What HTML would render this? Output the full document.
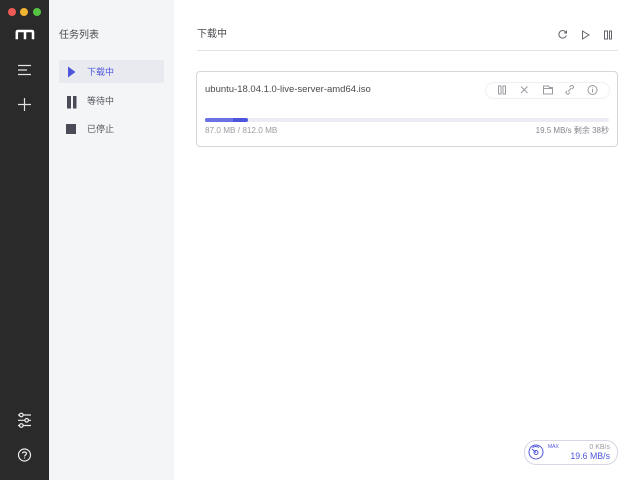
<!DOCTYPE html>
<html>
<head>
<meta charset="utf-8">
<style>
html,body{margin:0;padding:0;width:640px;height:480px;overflow:hidden;background:#fff;font-family:"Liberation Sans","Noto Sans CJK SC",sans-serif}
div,svg{position:absolute}
.t{white-space:nowrap}
</style>
</head>
<body>
<div style="left:0;top:0;width:49px;height:480px;background:#2a2a2a"></div>
<div style="left:49px;top:0;width:125px;height:480px;background:#f4f5f7"></div>
<div style="left:8px;top:8px;width:8px;height:8px;border-radius:50%;background:#ee5a55"></div>
<div style="left:20px;top:8px;width:8px;height:8px;border-radius:50%;background:#f0b435"></div>
<div style="left:33px;top:8px;width:8px;height:8px;border-radius:50%;background:#55c443"></div>

<svg style="left:0;top:0" width="49" height="480" fill="none" stroke="#fff">
<path d="M16.800 39.300V32.300Q16.800 31 18 31H31.800Q33 31 33 32.300V39.300M25 39.300V32" stroke-width="2.500"/>
<path d="M18 65.500H31M18 70H27M18 74.500H31" stroke="#e4e4e4" stroke-width="1.200"/>
<path d="M24.500 98V111M18 104.500H31" stroke="#e4e4e4" stroke-width="1.200"/>
<g stroke-width="1.200" stroke="#ececec">
<path d="M18 415H19.500M23 415H31M18 420.300H25M28.500 420.300H31M18 425.500H19.500M23 425.500H31"/>
<circle cx="21.300" cy="415" r="1.800"/><circle cx="26.700" cy="420.300" r="1.800"/><circle cx="21.300" cy="425.500" r="1.800"/>
<circle cx="24.500" cy="455" r="6"/>
<path d="M22.500 453.300C22.700 451.500 26.500 451.500 26.500 453.500C26.500 455 24.500 455 24.500 456.500M24.500 457.500V458.500"/>
</g>
</svg>

<div class="t" style="left:59px;top:28px;font-size:10px;line-height:15px;color:#4a4a4f">任务列表</div>
<div style="left:59px;top:60px;width:105px;height:23px;border-radius:2px;background:#e9eaef"></div>
<svg style="left:59px;top:60px" width="30" height="85">
<path d="M9 6.500L16.500 12L9 17.500Z" fill="#4d55dc"/>
<path d="M8 36H12V48.500H8ZM14 36H17.500V48.500H14Z" fill="#4a4b57"/>
<path d="M7 64H17V74H7Z" fill="#4a4b57"/>
</svg>
<div class="t" style="left:87px;top:65px;font-size:9px;line-height:14px;color:#4d55dc">下载中</div>
<div class="t" style="left:87px;top:94px;font-size:9px;line-height:14px;color:#55565c">等待中</div>
<div class="t" style="left:87px;top:122px;font-size:9px;line-height:14px;color:#55565c">已停止</div>

<div class="t" style="left:197px;top:27px;font-size:10px;line-height:15px;color:#4a4a4f">下载中</div>
<div style="left:197px;top:50px;width:421px;height:1px;background:#e3e3e6"></div>
<svg style="left:550px;top:25px" width="70" height="20" fill="none" stroke="#66676d" stroke-width="1">
<path d="M16 7.500A3.800 3.800 0 1 0 16.300 10.500M16.500 5.500V8H14"/>
<path d="M32.500 6L39 10L32.500 14Z"/>
<path d="M54.500 6H57.500V14H54.500ZM59.500 6H61.500V14H59.500Z"/>
</svg>

<div style="left:196px;top:71px;width:420px;height:74px;border:1px solid #d6d6d9;border-radius:4px;background:#fff"></div>
<div class="t" style="left:205px;top:83px;font-size:9.500px;line-height:14px;color:#4a4a4f">ubuntu-18.04.1.0-live-server-amd64.iso</div>
<div style="left:485px;top:82px;width:123px;height:15px;border:1px solid #f0f0f2;border-radius:9px"></div>
<svg style="left:490px;top:80px" width="115" height="20" fill="none" stroke="#9a9ba0" stroke-width="1">
<path d="M8.500 6H11V14H8.500ZM13 6H15.500V14H13Z"/>
<path d="M31 6.500L37.500 13M37.500 6.500L31 13"/>
<path d="M53.500 6H58.500L59.500 7.500H62.500V14H53.500ZM53.500 8.500H62.500"/>
<path d="M77 11L76 12A1.800 1.800 0 0 0 78.500 14L80 12.500M82 9L83.500 7.500A1.800 1.800 0 0 0 81 5.500L79.500 7M78 11.500L81.500 8"/>
<circle cx="102.500" cy="10" r="4.500"/>
<path d="M102.500 9V12.500M102.500 7.500V8.200"/>
</svg>
<div style="left:205px;top:118px;width:404px;height:4px;border-radius:2px;background:#ebecf5"></div>
<div style="left:205px;top:118px;width:43px;height:4px;border-radius:2px;background:#4d55dc"></div>
<div style="left:205px;top:118px;width:28px;height:4px;border-radius:2px 0 0 2px;background:#6b72e6"></div>
<div class="t" style="left:205px;top:125px;font-size:8.200px;line-height:12px;color:#9b9ca1">87.0 MB / 812.0 MB</div>
<div class="t" style="right:31px;top:125px;font-size:8px;line-height:12px;color:#85868c">19.5 MB/s 剩余 38秒</div>

<div style="left:524px;top:440px;width:92px;height:23px;border:1px solid #d6d6e4;border-radius:12px"></div>
<svg style="left:526px;top:442px" width="20" height="20" fill="none" stroke="#4d55dc" stroke-width="1">
<circle cx="10" cy="10" r="7"/><circle cx="10" cy="10.500" r="2"/>
<path d="M6 7L10 10.500M6.500 5.500A6 6 0 0 1 13 5.500"/>
</svg>
<div class="t" style="left:548px;top:443px;font-size:5px;line-height:8px;color:#4d55dc">MAX</div>
<div class="t" style="right:30px;top:443px;font-size:7px;line-height:10px;color:#9b9ca1">0 KB/s</div>
<div class="t" style="right:30px;top:450px;font-size:8.800px;line-height:12px;color:#4d55dc">19.6 MB/s</div>
</body>
</html>
